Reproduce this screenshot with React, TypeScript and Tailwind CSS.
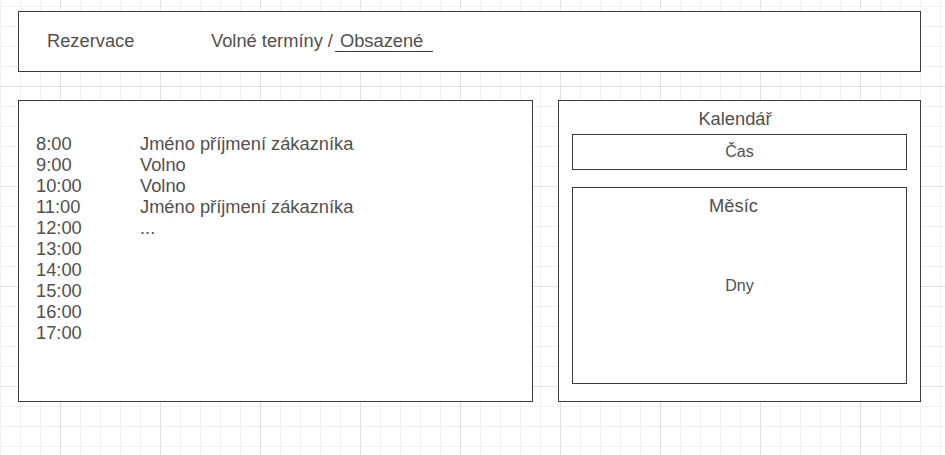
const slots = [
  { time: "8:00", label: "Jméno příjmení zákazníka" },
  { time: "9:00", label: "Volno" },
  { time: "10:00", label: "Volno" },
  { time: "11:00", label: "Jméno příjmení zákazníka" },
  { time: "12:00", label: "..." },
  { time: "13:00", label: "" },
  { time: "14:00", label: "" },
  { time: "15:00", label: "" },
  { time: "16:00", label: "" },
  { time: "17:00", label: "" },
];

export default function App() {
  return (
    <div className="w-[945px] h-[455px] overflow-hidden bg-white pl-[18px] pt-[11px] font-['Liberation_Sans',Arial,sans-serif] text-[#505050] [background-image:linear-gradient(to_right,#e2e2e2_1px,transparent_1px),linear-gradient(to_bottom,#e2e2e2_1px,transparent_1px),linear-gradient(to_right,#f0f0f0_1px,transparent_1px),linear-gradient(to_bottom,#f0f0f0_1px,transparent_1px)] [background-size:100px_100px,100px_100px,20px_20px,20px_20px] [background-position:60px_86px,60px_86px,0px_6px,0px_6px]">
      {/* header */}
      <div className="flex h-[61px] w-[903px] items-center border border-[#3d3d3d] bg-white pb-[2px] pl-[28px] text-[18.3px] leading-[21px]">
        <span className="w-[164px]">Rezervace</span>
        <span>
          Volné termíny /
          <span className="ml-[2px] inline-block border-b border-[#3d3d3d] pl-[5px] pr-[10px]">Obsazené</span>
        </span>
      </div>

      <div className="mt-[28px] flex gap-[25px]">
        {/* day schedule */}
        <div className="h-[302px] w-[515px] border border-[#3d3d3d] bg-white pl-[17px] pt-[32px] text-[18.3px] leading-[21px]">
          <div className="grid grid-cols-[104px_1fr]">
            {slots.map((s) => (
              <div key={s.time} className="contents">
                <span>{s.time}</span>
                <span>{s.label}</span>
              </div>
            ))}
          </div>
        </div>

        {/* calendar */}
        <div className="flex h-[302px] w-[363px] flex-col border border-[#3d3d3d] bg-white px-[13px] pb-[17px] pt-[8px]">
          <div className="pr-[9px] text-center text-[18.3px] leading-[20px]">Kalendář</div>
          <div className="mt-[5px] flex h-[36px] items-center justify-center border border-[#3d3d3d] text-[16px]">
            Čas
          </div>
          <div className="mt-[17px] flex flex-1 flex-col border border-[#3d3d3d] pt-[8px]">
            <div className="pr-[12px] text-center text-[18.3px] leading-[20px]">Měsíc</div>
            <div className="flex flex-1 items-center justify-center pb-[28px] text-[16px]">Dny</div>
          </div>
        </div>
      </div>
    </div>
  );
}
